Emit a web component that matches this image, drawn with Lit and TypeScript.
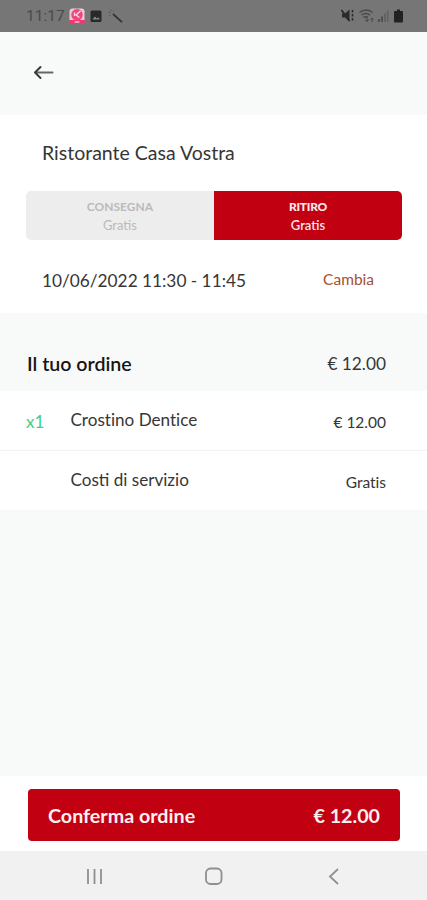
import { LitElement, html, css, svg } from "lit";
import { customElement } from "lit/decorators.js";

const appBadge = svg`
  <rect x=".5" y=".5" width="15" height="15" rx="3" fill="#e9cdd5"/>
  <path d="M0 12h16v1a3 3 0 0 1-3 3H3a3 3 0 0 1-3-3z" fill="#f0386f"/>
  <circle cx="8" cy="6.800" r="5.800" fill="#f0487e"/>
  <path d="M11.500 3 7 7l3.500 2.500M5.500 4.500v3.500" fill="none" stroke="#fbdce6" stroke-width="1.300"/>
  <path d="M5.600 14h4.800" stroke="#fbdce6" stroke-width="1.200"/>`;

@customElement("app-root")
export class AppRoot extends LitElement {
  static styles = css`
    :host {
      display: flex;
      flex-direction: column;
      box-sizing: border-box;
      width: 100%;
      height: 900px;
      overflow: hidden;
      background: #f8faf9;
      color: #363636;
      font-family: Lato, "Liberation Sans", sans-serif;
      white-space: nowrap;
    }
    svg { display: block; }
    .status {
      display: flex;
      align-items: center;
      height: 32px;
      flex: none;
      box-sizing: border-box;
      padding: 0 22px 0 26px;
      background: #767676;
      color: #4a4a4a;
      font: 15.5px/33px Roboto, sans-serif;
    }
    .time { width: 43px; }
    .status .right { margin-left: auto; }
    .header {
      display: flex;
      align-items: center;
      height: 83px;
      flex: none;
      box-sizing: border-box;
      padding: 0 33px 3px;
    }
    .pickup {
      height: 198px;
      flex: none;
      box-sizing: border-box;
      padding: 23px 25px 0 26px;
      background: #fff;
    }
    .name { padding-left: 16px; font-size: 19.5px; line-height: 30px; }
    .tabs {
      display: flex;
      height: 49px;
      margin-top: 23px;
      border-radius: 5px;
      overflow: hidden;
    }
    .tab {
      flex: 1;
      box-sizing: border-box;
      padding-top: 7px;
      text-align: center;
      font-size: 13px;
      line-height: 18px;
      background: #ededed;
      color: #bababa;
    }
    .tab b { display: block; font-size: 12px; }
    .tab.on { background: #c10012; color: #fbe6e8; font-weight: 600; }
    .tab.on b { font-weight: 900; letter-spacing: -0.25px; }
    .slot {
      display: flex;
      justify-content: space-between;
      padding: 26px 28px 0 16px;
      font-size: 17.25px;
      line-height: 30px;
    }
    .change { color: #a6512d; font-size: 15.5px; line-height: 27px; }
    .total {
      display: flex;
      justify-content: space-between;
      height: 78px;
      flex: none;
      box-sizing: border-box;
      padding: 36px 41px 0 27px;
      font-size: 17.3px;
      line-height: 30px;
    }
    .title { color: #161616; font-size: 19.6px; font-weight: 600; line-height: 29px; }
    .row {
      display: flex;
      height: 59px;
      flex: none;
      box-sizing: border-box;
      padding: 14px 41px 0 26px;
      background: #fff;
      font-size: 17.1px;
      line-height: 30px;
    }
    .row + .row { height: 60px; border-top: 1px solid #f3f3f3; }
    .plain { font-variant-ligatures: none; }
    .qty { width: 44.5px; color: #43ce85; font-size: 17px; line-height: 34px; }
    .price { margin-left: auto; font-size: 15.5px; line-height: 35px; }
    .footer {
      height: 75px;
      margin-top: auto;
      flex: none;
      box-sizing: border-box;
      padding: 13px 27px 0 28px;
      background: #fff;
    }
    .confirm {
      display: flex;
      justify-content: space-between;
      width: 100%;
      height: 52px;
      padding: 0 20px;
      border: 0;
      border-radius: 4px;
      background: #c10012;
      color: #fdf0f1;
      font: bold 19.7px/53px Lato, sans-serif;
    }
    .nav { height: 49px; flex: none; background: #f1f1f1; }
  `;

  render() {
    return html`
      <div class="status">
        <span class="time">11:17</span>
        <svg width="56" height="18" viewBox="0 0 56 18">
          <g transform="translate(0 1)">${appBadge}</g>
          <rect x="21.500" y="3.500" width="11" height="11.500" rx="1.500" fill="#292929"/>
          <path d="m23.500 12.500 2.300-3 2 2 1.400-1.200 1.800 2.200z" fill="#8a8a8a"/>
          <path d="m44 7 9 8.200" stroke="#343434" stroke-width="1.800"/>
          <path d="M39.500 5.500h2M42 2.500v1.500M45 3.500l-1 1M40 9l1.500-1" stroke="#555"/>
        </svg>
        <svg class="right" width="66" height="18" viewBox="0 0 66 18">
          <path d="M3 6.500h3l4.500-4v12l-4.500-4H3z" fill="#2b2b2b"/>
          <path d="m2.500 3 8 11" stroke="#2b2b2b" stroke-width="1.800"/>
          <path d="M13.500 3v11.500" stroke="#2b2b2b" stroke-width="1.600" stroke-dasharray="2.500 1.500"/>
          <g fill="none" stroke="#484848" stroke-width="1.500">
            <path d="M20.500 5.500q7-5 13 0M22.500 8q4.500-3 8.500 0M24.500 10.500q2.500-1.500 4.500 0"/>
            <path d="M28 10.500v4M26.500 12.500l1.500 2 1.500-2M33 15v-4M31.500 12.500l1.500-1.500 1.500 1.500" stroke-width="1"/>
          </g>
          <path d="M39 12h2v3h-2zM42 9.500h2v5.500h-2z" fill="#505050"/>
          <path d="M45 6.500h1.800v8.500H45zM48 3.500h1.500v11.500H48z" fill="#606060"/>
          <path d="M56 4h2V2.500h3V4h2q1 0 1 1v9.500q0 1-1 1h-7q-1 0-1-1V5q0-1 1-1z" fill="#222"/>
        </svg>
      </div>
      <div class="header">
        <svg width="22" height="16" viewBox="0 0 22 16" fill="none" stroke-width="2" stroke-linecap="round" stroke-linejoin="round">
          <path d="M3 8.500h16.500" stroke="#666"/>
          <path d="M7.500 3 2 8.500 7.500 14" stroke="#383838"/>
        </svg>
      </div>
      <div class="pickup">
        <div class="name">Ristorante Casa Vostra</div>
        <div class="tabs">
          <div class="tab"><b>CONSEGNA</b>Gratis</div>
          <div class="tab on"><b>RITIRO</b>Gratis</div>
        </div>
        <div class="slot"><span>10/06/2022 11:30 - 11:45</span><span class="change">Cambia</span></div>
      </div>
      <div class="total"><span class="title">Il tuo ordine</span><span>€ 12.00</span></div>
      <div class="row"><span class="qty">x1</span><span class="plain">Crostino Dentice</span><span class="price">€ 12.00</span></div>
      <div class="row"><span class="qty"></span><span>Costi di servizio</span><span class="price plain">Gratis</span></div>
      <div class="footer">
        <button class="confirm"><span>Conferma ordine</span><span>€ 12.00</span></button>
      </div>
      <div class="nav">
        <svg width="427" height="49" viewBox="0 0 427 49" fill="none" stroke="#8f8f8f" stroke-width="1.800">
          <path d="M88 18v15M94.500 18v15M101 18v15"/>
          <rect x="206" y="17.500" width="15.500" height="15.500" rx="4.500"/>
          <path d="m338 18-8 7.500 8 7.500"/>
        </svg>
      </div>
    `;
  }
}
